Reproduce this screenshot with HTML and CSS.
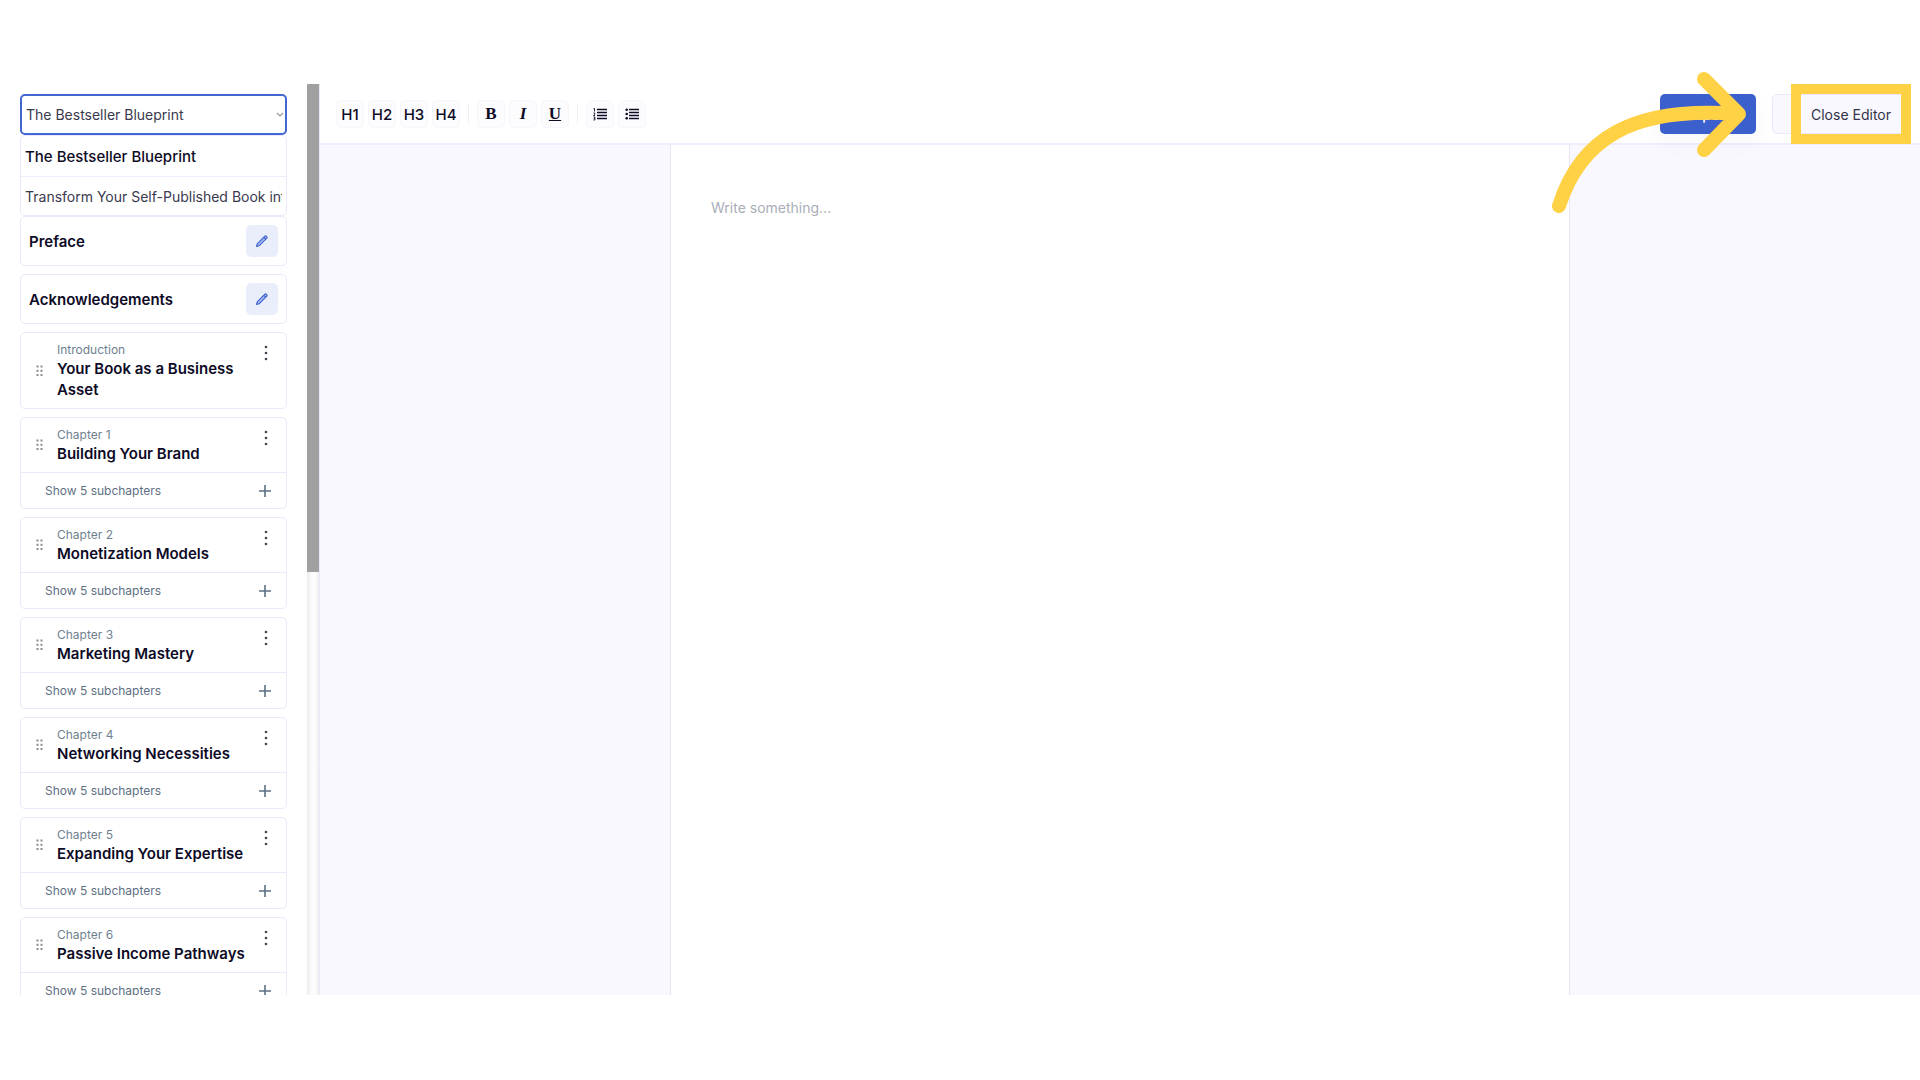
FILE: index.html
```
<!DOCTYPE html>
<html lang="en">
<head>
    <meta charset="UTF-8">
    <meta name="viewport" content="width=device-width, initial-scale=1.0">
    <title>Book Editor</title>
    <link rel="stylesheet" href="styles.css">
</head>
<body>
    <!-- Shared icons -->
    <svg class="sprite" aria-hidden="true">
        <symbol id="icon-grip" viewBox="0 0 8 12">
            <g fill="currentColor">
                <rect x="0.5" y="0.5" width="2" height="2"/><rect x="4.5" y="0.5" width="2" height="2"/>
                <rect x="0.5" y="4.8" width="2" height="2"/><rect x="4.5" y="4.8" width="2" height="2"/>
                <rect x="0.5" y="9" width="2" height="2"/><rect x="4.5" y="9" width="2" height="2"/>
            </g>
        </symbol>
        <symbol id="icon-more" viewBox="0 0 4 16">
            <g fill="currentColor">
                <circle cx="2" cy="2" r="1.3"/><circle cx="2" cy="8" r="1.3"/><circle cx="2" cy="14" r="1.3"/>
            </g>
        </symbol>
        <symbol id="icon-plus" viewBox="0 0 14 14">
            <path d="M7 1v12M1 7h12" fill="none" stroke="currentColor" stroke-width="1.6"/>
        </symbol>
        <symbol id="icon-pencil" viewBox="0 0 14 14">
            <path d="M1.6 12.4l.6-2.5L9.9 2.2q.7-.7 1.3 0l.6.6q.7.7 0 1.3L4.1 11.8zM8.8 3.3l1.9 1.9" fill="#a9bbee" stroke="currentColor" stroke-width="1.1" stroke-linejoin="round"/>
        </symbol>
    </svg>

    <div class="app">
        <!-- Sidebar -->
        <aside class="sidebar">
            <div class="sidebar-content">
                <div class="picker">
                    <div class="select-wrap">
                        <select class="book-select" aria-label="Title">
                            <option>The Bestseller Blueprint</option>
                            <option>Transform Your Self-Published Book into a Business</option>
                        </select>
                        <svg class="chevron" viewBox="0 0 8 6" aria-hidden="true"><path d="M1 1l3 3 3-3" fill="none" stroke="currentColor" stroke-width="1.2"/></svg>
                    </div>
                    <div class="options">
                        <button type="button" class="option selected">The Bestseller Blueprint</button>
                        <button type="button" class="option"><span class="option-text">Transform Your Self-Published Book into a Business</span></button>
                    </div>
                </div>

                <div class="cards">
                    <div class="card page-card">
                        <span class="card-title">Preface</span>
                        <button type="button" class="edit-btn" aria-label="Edit preface"><svg><use href="#icon-pencil"/></svg></button>
                    </div>
                    <div class="card page-card">
                        <span class="card-title">Acknowledgements</span>
                        <button type="button" class="edit-btn" aria-label="Edit acknowledgements"><svg><use href="#icon-pencil"/></svg></button>
                    </div>

                    <div class="card">
                        <div class="chapter">
                            <svg class="grip"><use href="#icon-grip"/></svg>
                            <div class="chapter-text">
                                <div class="caption">Introduction</div>
                                <div class="card-title">Your Book as a Business Asset</div>
                            </div>
                            <button type="button" class="more-btn" aria-label="More"><svg><use href="#icon-more"/></svg></button>
                        </div>
                    </div>

                    <div class="card">
                        <div class="chapter">
                            <svg class="grip"><use href="#icon-grip"/></svg>
                            <div class="chapter-text">
                                <div class="caption">Chapter 1</div>
                                <div class="card-title">Building Your Brand</div>
                            </div>
                            <button type="button" class="more-btn" aria-label="More"><svg><use href="#icon-more"/></svg></button>
                        </div>
                        <button type="button" class="subchapters">Show 5 subchapters<svg><use href="#icon-plus"/></svg></button>
                    </div>

                    <div class="card">
                        <div class="chapter">
                            <svg class="grip"><use href="#icon-grip"/></svg>
                            <div class="chapter-text">
                                <div class="caption">Chapter 2</div>
                                <div class="card-title">Monetization Models</div>
                            </div>
                            <button type="button" class="more-btn" aria-label="More"><svg><use href="#icon-more"/></svg></button>
                        </div>
                        <button type="button" class="subchapters">Show 5 subchapters<svg><use href="#icon-plus"/></svg></button>
                    </div>

                    <div class="card">
                        <div class="chapter">
                            <svg class="grip"><use href="#icon-grip"/></svg>
                            <div class="chapter-text">
                                <div class="caption">Chapter 3</div>
                                <div class="card-title">Marketing Mastery</div>
                            </div>
                            <button type="button" class="more-btn" aria-label="More"><svg><use href="#icon-more"/></svg></button>
                        </div>
                        <button type="button" class="subchapters">Show 5 subchapters<svg><use href="#icon-plus"/></svg></button>
                    </div>

                    <div class="card">
                        <div class="chapter">
                            <svg class="grip"><use href="#icon-grip"/></svg>
                            <div class="chapter-text">
                                <div class="caption">Chapter 4</div>
                                <div class="card-title">Networking Necessities</div>
                            </div>
                            <button type="button" class="more-btn" aria-label="More"><svg><use href="#icon-more"/></svg></button>
                        </div>
                        <button type="button" class="subchapters">Show 5 subchapters<svg><use href="#icon-plus"/></svg></button>
                    </div>

                    <div class="card">
                        <div class="chapter">
                            <svg class="grip"><use href="#icon-grip"/></svg>
                            <div class="chapter-text">
                                <div class="caption">Chapter 5</div>
                                <div class="card-title">Expanding Your Expertise</div>
                            </div>
                            <button type="button" class="more-btn" aria-label="More"><svg><use href="#icon-more"/></svg></button>
                        </div>
                        <button type="button" class="subchapters">Show 5 subchapters<svg><use href="#icon-plus"/></svg></button>
                    </div>

                    <div class="card">
                        <div class="chapter">
                            <svg class="grip"><use href="#icon-grip"/></svg>
                            <div class="chapter-text">
                                <div class="caption">Chapter 6</div>
                                <div class="card-title">Passive Income Pathways</div>
                            </div>
                            <button type="button" class="more-btn" aria-label="More"><svg><use href="#icon-more"/></svg></button>
                        </div>
                        <button type="button" class="subchapters">Show 5 subchapters<svg><use href="#icon-plus"/></svg></button>
                    </div>
                </div>
            </div>
            <div class="scrollbar"><div class="thumb"></div></div>
        </aside>

        <!-- Editor -->
        <main class="main">
            <header class="toolbar">
                <div class="tools">
                    <button type="button" class="tool">H1</button>
                    <button type="button" class="tool">H2</button>
                    <button type="button" class="tool">H3</button>
                    <button type="button" class="tool">H4</button>
                    <span class="divider"></span>
                    <button type="button" class="tool serif bold">B</button>
                    <button type="button" class="tool serif italic">I</button>
                    <button type="button" class="tool serif underline">U</button>
                    <span class="divider"></span>
                    <button type="button" class="tool" aria-label="Numbered list">
                        <svg viewBox="0 0 14 14"><path d="M4 2.5h10M4 5.5h10M4 8.5h10M4 11.5h10" stroke="currentColor" stroke-width="1.5"/><path d="M.5 1.5h1v3M.5 6h1.3v1.2L.5 8.6h1.6M.5 10h1.4v3H.5M.8 11.5h1" fill="none" stroke="currentColor" stroke-width=".9"/></svg>
                    </button>
                    <button type="button" class="tool" aria-label="Bulleted list">
                        <svg viewBox="0 0 14 14"><path d="M4 2.5h10M4 5.5h10M4 8.5h10M4 11.5h10" stroke="currentColor" stroke-width="1.5"/><g fill="currentColor"><circle cx="1.7" cy="2.8" r="1.3"/><circle cx="1.7" cy="7" r="1.3"/><circle cx="1.7" cy="11.2" r="1.3"/></g></svg>
                    </button>
                </div>
                <div class="actions">
                    <button type="button" class="btn btn-primary">Export</button>
                    <button type="button" class="btn btn-close">
                        <svg viewBox="0 0 14 14"><path d="M13 7H4M8 3L4 7l4 4" fill="none" stroke="currentColor" stroke-width="1.2"/></svg>
                        Close Editor
                    </button>
                    <!-- Tutorial callout -->
                    <div class="highlight"></div>
                    <svg class="arrow" viewBox="0 0 200 146" aria-hidden="true">
                        <path d="M9 136C30 70 80 36 188 44M154 9l35 35-35 36" fill="none" stroke="#ffd145" stroke-width="14" stroke-linecap="round" stroke-linejoin="round"/>
                    </svg>
                </div>
            </header>
            <div class="canvas">
                <textarea class="paper" aria-label="Text" placeholder="Write something..."></textarea>
            </div>
        </main>
    </div>
</body>
</html>
```
FILE: styles.css
```
* {
    box-sizing: border-box;
}

body {
    margin: 0;
    height: 100vh;
    padding: 84px 0 85px;
    background-color: #fff;
    color: #0d0b26;
    font-family: Inter, "Liberation Sans", sans-serif;
    font-size: 15px;
    overflow: hidden;
}

button, select, textarea {
    margin: 0;
    padding: 0;
    border: none;
    background: none;
    color: inherit;
    font: inherit;
}

button {
    cursor: pointer;
}

.sprite {
    display: none;
}

.app {
    display: flex;
    height: 100%;
}

/* Sidebar */
.sidebar {
    display: flex;
    flex: 0 0 320px;
    overflow: hidden;
    border-right: 1px solid #e9e8f4;
}

.sidebar-content {
    flex: 1;
    min-width: 0;
    padding: 10px 20px 0;
}

.scrollbar {
    flex: 0 0 12px;
    background: linear-gradient(to right, #ececec, #fcfcfc 40%, #fcfcfc 70%, #efeff2);
}

.thumb {
    height: 53.6%;
    background-color: #a0a0a0;
}

.select-wrap {
    display: grid;
    align-items: center;
}

.book-select, .chevron {
    grid-area: 1 / 1;
}

.book-select {
    width: 100%;
    height: 41px;
    padding: 0 20px 0 4px;
    border: 2px solid #4367d2;
    border-radius: 5px;
    appearance: none;
    color: #3a394e;
    font-size: 14px;
}

.chevron {
    justify-self: end;
    width: 8px;
    height: 6px;
    margin-right: 3px;
    color: #999;
    pointer-events: none;
}

.options {
    border: 1px solid #eae8fa;
    border-radius: 5px;
}

.option {
    display: block;
    width: 100%;
    height: 38px;
    padding: 0 4px;
    color: #3a394e;
    font-size: 14px;
    text-align: left;
    white-space: nowrap;
}

.option-text {
    display: block;
    overflow: hidden;
}

.option.selected {
    height: 41px;
    border-bottom: 1px solid #eeedfb;
    color: #0d0b26;
    font-size: 15px;
    font-weight: 500;
}

.cards {
    display: flex;
    flex-direction: column;
    gap: 8px;
}

.card {
    border: 1px solid #eae8fa;
    border-radius: 5px;
}

.page-card {
    display: flex;
    align-items: center;
    justify-content: space-between;
    padding: 8px;
}

.card-title {
    font-size: 15px;
    font-weight: 600;
    line-height: 21px;
}

.edit-btn {
    display: flex;
    align-items: center;
    justify-content: center;
    width: 32px;
    height: 32px;
    border-radius: 5px;
    background-color: #e9eefa;
    color: #3b5fcf;
}

.edit-btn svg {
    width: 14px;
    height: 14px;
}

.chapter {
    display: flex;
    align-items: center;
    padding: 8px 16px 8px 15px;
}

.grip {
    width: 8px;
    height: 12px;
    margin-right: 13px;
    color: #8b8b93;
}

.chapter-text {
    flex: 1;
}

.caption {
    color: #6f7f90;
    font-size: 12px;
    line-height: 17px;
}

.more-btn {
    align-self: flex-start;
    display: flex;
    padding: 4px 2px;
    color: #44444f;
}

.more-btn svg {
    width: 4px;
    height: 16px;
}

.subchapters {
    display: flex;
    align-items: center;
    justify-content: space-between;
    width: 100%;
    height: 36px;
    padding: 0 14px 0 24px;
    border-top: 1px solid #eae8fa;
    color: #5d6f82;
    font-size: 12px;
}

.subchapters svg {
    width: 14px;
    height: 14px;
}

/* Editor */
.main {
    display: flex;
    flex: 1;
    flex-direction: column;
    min-width: 0;
}

.toolbar {
    display: flex;
    align-items: center;
    justify-content: space-between;
    padding: 10px 16px 9px;
    border-bottom: 2px solid #efedfc;
}

.tools {
    display: flex;
    align-items: center;
    gap: 4px;
}

.tool {
    display: flex;
    align-items: center;
    justify-content: center;
    width: 28px;
    height: 28px;
    border: 1px solid #f7f6fc;
    border-radius: 5px;
    background-color: #fcfcfe;
    font-weight: 500;
}

.tool svg {
    width: 14px;
    height: 14px;
}

.serif {
    font-family: "Liberation Serif", serif;
    font-size: 17px;
    font-weight: 700;
}

.italic {
    font-style: italic;
}

.underline {
    text-decoration: underline;
}

.divider {
    width: 1px;
    height: 20px;
    margin: 0 4px;
    background-color: #f1f0f8;
}

.actions {
    position: relative;
    display: flex;
    gap: 16px;
}

.btn {
    height: 40px;
    border-radius: 5px;
    font-size: 14px;
}

.btn-primary {
    width: 96px;
    background-color: #3b5fcd;
    box-shadow: 0 8px 24px rgba(60, 60, 120, 0.04);
    color: #fff;
    font-weight: 500;
}

.btn-close {
    display: flex;
    align-items: center;
    gap: 9px;
    padding: 0 12px 0 15px;
    border: 1px solid #eae8fa;
    background-color: #f9f8fe;
    color: #33324a;
}

.btn-close svg {
    width: 14px;
    height: 14px;
}

.highlight {
    position: absolute;
    top: -10px;
    right: -7px;
    width: 120px;
    height: 60px;
    border: 10px solid #ffd145;
    pointer-events: none;
}

.arrow {
    position: absolute;
    top: -24px;
    right: 154px;
    width: 200px;
    height: 146px;
    pointer-events: none;
}

.canvas {
    display: flex;
    flex: 1;
    justify-content: center;
    background-color: #f9f8fe;
}

.paper {
    width: 100%;
    max-width: 900px;
    padding: 53px 40px;
    border: solid #e6e4f6;
    border-width: 0 1px;
    outline: none;
    background-color: #fff;
    font-size: 14px;
    line-height: 20px;
    resize: none;
}

.paper::placeholder {
    color: #a9aeb8;
}
```
